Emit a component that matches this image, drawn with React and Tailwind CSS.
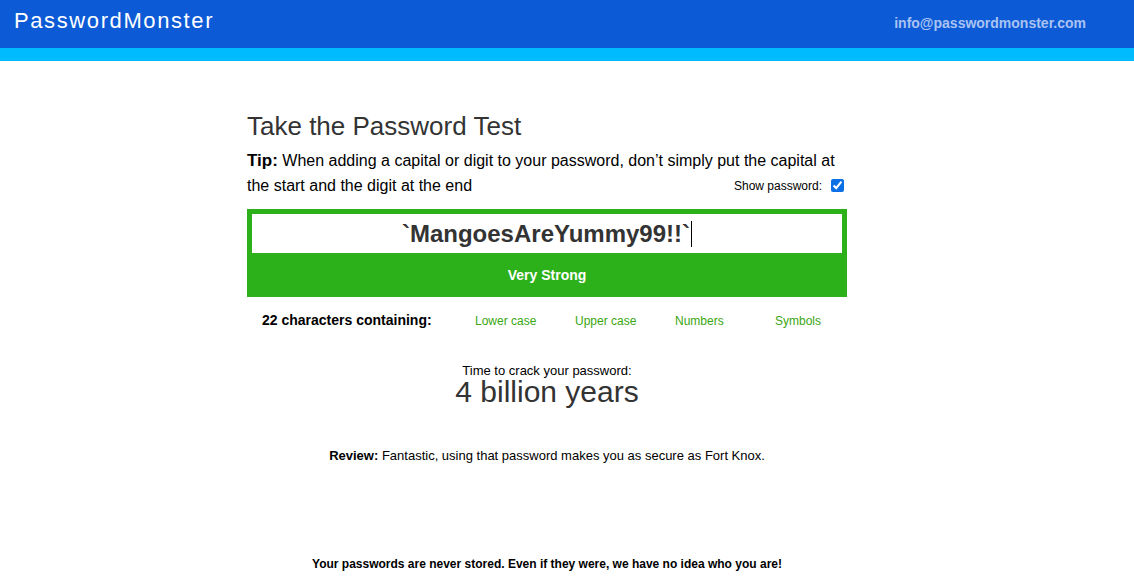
export default function App() {
    const traits = ["Lower case", "Upper case", "Numbers", "Symbols"];

    return (
        <div className="min-h-[583px] bg-white font-['Liberation_Sans',Arial,sans-serif] text-[#333]">
            <header>
                <div className="flex h-[48px] items-center justify-between bg-[#0c5ad6] pl-[14px] pr-[48px]">
                    <span className="-mt-[6px] text-[22px] leading-none tracking-[1.6px] text-white">
                        PasswordMonster
                    </span>
                    <a className="-mt-[2px] text-[14px] font-bold text-[#a9c3f2]">info@passwordmonster.com</a>
                </div>
                <div className="h-[13px] bg-[#00bbfd]" />
            </header>

            <div className="flex justify-center pr-[40px]">
                <main className="w-[600px] shrink-0 pt-[50px]">
                    <h1 className="text-[26px] leading-[30px] text-[#333]">Take the Password Test</h1>

                    <div className="relative mt-[7px] text-[16px] leading-[25px] text-black">
                        <p>
                            <b className="text-[17px]">Tip:</b> When adding a capital or digit to your password, don’t simply put the capital at
                            the start and the digit at the end
                        </p>
                        <label className="absolute bottom-[6px] right-[3px] flex items-center gap-[9px] text-[12px] leading-none text-black">
                            Show password:
                            <input type="checkbox" defaultChecked className="h-[13px] w-[13px] accent-[#0b6fe6]" />
                        </label>
                    </div>

                    <div className="mt-[11px] bg-[#2db11a] px-[5px] pt-[5px]">
                        <div className="flex h-[39px] items-center justify-center bg-white">
                            <span className="text-[24px] font-bold text-[#333]">`MangoesAreYummy99!!`</span>
                            <span className="ml-[1px] h-[26px] w-px bg-black" />
                        </div>
                        <div className="flex h-[44px] items-center justify-center text-[14px] font-bold text-white">
                            Very Strong
                        </div>
                    </div>

                    <div className="mt-[13px] flex items-center">
                        <span className="w-[228px] shrink-0 pl-[15px] text-[14px] font-bold text-black">
                            22 characters containing:
                        </span>
                        {traits.map((t) => (
                            <span key={t} className="w-[100px] shrink-0 text-[12px] text-[#3aa611]">
                                {t}
                            </span>
                        ))}
                    </div>

                    <div className="mt-[32px] flex flex-col items-center">
                        <span className="text-[13px] leading-[15px] text-black">Time to crack your password:</span>
                        <span className="text-[30px] leading-[28px] text-[#333]">4 billion years</span>
                    </div>

                    <p className="mt-[40px] text-center text-[13px] text-black">
                        <b>Review:</b> Fantastic, using that password makes you as secure as Fort Knox.
                    </p>

                    <p className="mt-[89px] text-center text-[12px] font-bold text-black">
                        Your passwords are never stored. Even if they were, we have no idea who you are!
                    </p>
                </main>
            </div>
        </div>
    );
}
